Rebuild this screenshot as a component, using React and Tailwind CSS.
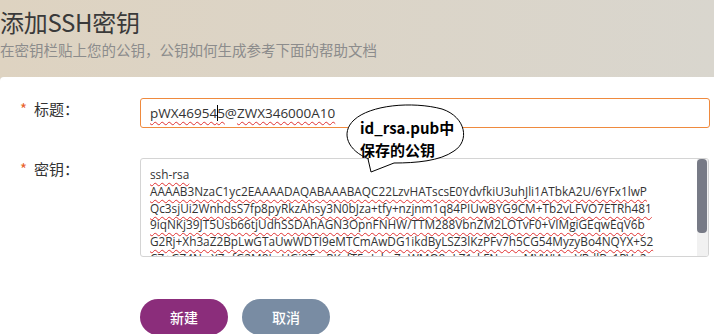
import React from 'react';

const keyLines = [
  'ssh-rsa',
  'AAAAB3NzaC1yc2EAAAADAQABAAABAQC22LzvHATscsE0YdvfkiU3uhJli1ATbkA2U/6YFx1lwP',
  'Qc3sjUi2WnhdsS7fp8pyRkzAhsy3N0bJza+tfy+nzjnm1q84PIUwBYG9CM+Tb2vLFVO7ETRh481',
  '9iqNKj39JT5Usb66tjUdhSSDAhAGN3OpnFNHW/TTM288VbnZM2LOTvF0+VIMgiGEqwEqV6b',
  'G2Rj+Xh3aZ2BpLwGTaUwWDTI9eMTCmAwDG1ikdByLSZ3lKzPFv7h5CG54MyzyBo4NQYX+S2',
  'CZ+GZ4NwXZnfG2M8LaUGj8TzxPKvfT5pJabxZoWMQ8pLZ1rkFNwwoMVWIAvvVRdlBc1PVa2',
];

const squiggle = 'underline decoration-wavy decoration-[#e03030] decoration-1 underline-offset-[3px]';
const latin = { fontFamily: '"Open Sans", "Noto Sans CJK SC", sans-serif' };

function Field({ label, children }) {
  return (
    <div className="flex items-start">
      <div className="w-[140px] shrink-0 pl-[20px] flex items-center text-[15px] text-[#333]">
        <span className="text-[#e8622c] w-[14px]">*</span>
        <span>{label}</span>
      </div>
      {children}
    </div>
  );
}

function Callout() {
  return (
    <div className="absolute left-[342px] top-[26px] w-[126px] h-[72px]">
      <svg width="126" height="72" className="absolute left-0 top-0">
        <path
          d="M27 56 C 6 48, -2 30, 12 17 C 28 2, 70 -2, 100 6 C 124 14, 128 38, 112 48 C 98 58, 74 60, 52 60 L 29 69 L 26 56"
          fill="white"
          stroke="black"
          strokeWidth="1"
        />
      </svg>
      <div className="absolute left-[18px] top-[14px] text-[15px] font-bold text-black leading-[22px] whitespace-nowrap">
        <div>id_rsa.pub中</div>
        <div>保存的公钥</div>
      </div>
    </div>
  );
}

export default function App() {
  return (
    <div className="w-[714px] h-[334px] overflow-hidden bg-[#dcd4c6]" style={{ fontFamily: '"Noto Sans CJK SC", "Noto Sans", sans-serif' }}>
      <div className="h-[77px] bg-gradient-to-r from-[#ded3c1] to-[#d9d6ce] pt-[7px]">
        <h1 className="text-[24px] leading-[30px] text-[#3a3a3a] tracking-[-0.3px]">添加SSH密钥</h1>
        <p className="text-[14.5px] leading-[20px] text-[#8c8c8c] mt-[3px]">在密钥栏贴上您的公钥，公钥如何生成参考下面的帮助文档</p>
      </div>
      <div className="relative bg-white rounded-tl-[4px] h-[257px] pt-[21px]">
        <Field label="标题：">
          <div className="w-[570px] h-[30px] border border-[#ef8a3e] rounded-[3px] flex items-center pl-[9px] text-[13.5px] text-[#333]" style={latin}>
            <span className={squiggle}>pWX46954</span>
            <span className="inline-block w-px h-[16px] bg-black -mr-px"></span>
            <span className={squiggle}>5</span>
            <span>@</span>
            <span className={squiggle}>ZWX346000A10</span>
          </div>
        </Field>
        <div className="mt-[30px]">
          <Field label="密钥：">
            <div className="relative w-[569px] h-[99px] border border-[#d4d4d4] rounded-[3px] overflow-hidden">
              <div className="pl-[9px] pt-[7px] pr-[14px] text-[11.8px] leading-[16.8px] text-[#333]" style={latin}>
                {keyLines.map((l, i) => (
                  <div key={i} className="whitespace-nowrap">
                    <span className={squiggle}>{l}</span>
                  </div>
                ))}
              </div>
              <div className="absolute right-0 top-0 bottom-0 w-[11px] bg-[#f1f1f1]">
                <div className="w-[10px] h-[74px] rounded-[4px] bg-[#777a86]"></div>
              </div>
            </div>
          </Field>
        </div>
        <div className="flex gap-[14px] pl-[140px] mt-[42px]">
          <button className="w-[88px] h-[36px] rounded-full bg-[#8b2d7b] text-white text-[14px] font-medium">新建</button>
          <button className="w-[88px] h-[36px] rounded-full bg-[#798ca3] text-white text-[14px] font-medium">取消</button>
        </div>
        <Callout />
      </div>
    </div>
  );
}
